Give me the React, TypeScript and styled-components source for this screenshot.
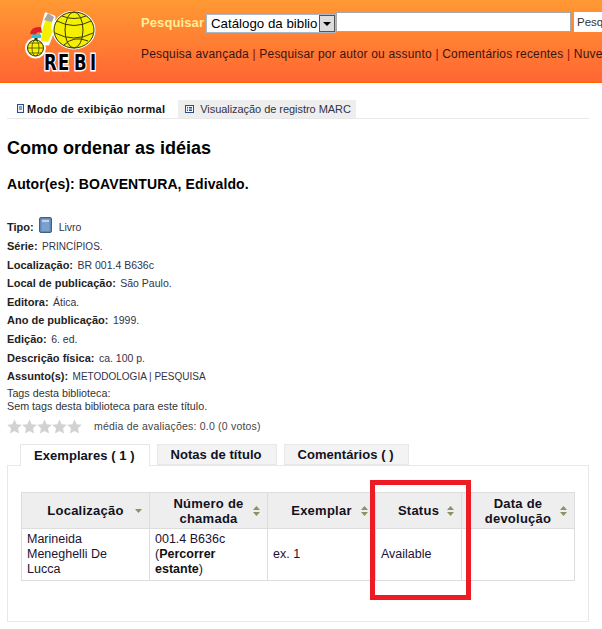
import React from "react";
import styled, { createGlobalStyle } from "styled-components";

const GlobalStyle = createGlobalStyle`
  html, body {
    margin: 0;
    padding: 0;
    background: #ffffff;
    overflow: hidden;
  }
  body {
    font-family: "Liberation Sans", Arial, sans-serif;
    color: #000000;
  }
`;

const fields = [
  { label: "Série:", value: "PRINCÍPIOS.", caps: true },
  { label: "Localização:", value: "BR 001.4 B636c" },
  { label: "Local de publicação:", value: "São Paulo." },
  { label: "Editora:", value: "Ática." },
  { label: "Ano de publicação:", value: "1999." },
  { label: "Edição:", value: "6. ed." },
  { label: "Descrição física:", value: "ca. 100 p." },
  { label: "Assunto(s):", value: "METODOLOGIA | PESQUISA", caps: true },
];

const columns = [
  { title: "Localização", width: 128, sort: "down" },
  { title: "Número de chamada", width: 118, sort: "both" },
  { title: "Exemplar", width: 108, sort: "both" },
  { title: "Status", width: 86, sort: "both" },
  { title: "Data de devolução", width: 113, sort: "both" },
];

const Logo = () => (
  <svg width="76" height="66" viewBox="0 0 76 66">
    <g fill="#ffffff" stroke="#ffffff" strokeWidth="3" strokeLinejoin="round">
      <ellipse cx="50" cy="19" rx="20" ry="18" />
      <circle cx="11.5" cy="37" r="9" />
      <path d="M18 18 L22 3 L30 6 L29 20 L24 33 L17 32 Z" />
    </g>
    <ellipse cx="50" cy="19" rx="20" ry="18" fill="#f5f000" stroke="#333300" strokeWidth="1" />
    <g fill="none" stroke="#3a3a00" strokeWidth="1">
      <ellipse cx="50" cy="19" rx="9" ry="18" />
      <path d="M33 10 Q50 19 67 10" />
      <path d="M31 22 Q50 32 69 22" />
      <path d="M38 5 Q50 10 62 5" />
      <path d="M40 34 Q50 24 64 30" />
    </g>
    <circle cx="11.5" cy="37" r="8" fill="#f5f000" stroke="#333300" strokeWidth="1" />
    <g fill="none" stroke="#3a3a00" strokeWidth="0.7">
      <ellipse cx="11.5" cy="37" rx="3.5" ry="8" />
      <path d="M3.5 37 H19.5 M5 32 H18 M5 42 H18" />
    </g>
    <path d="M19 16 L22 8 L28 10 L27 18 L29 20 L24 31 L17 30 L18 22 Z" fill="#f5f000" />
    <path d="M20 9 L24 2 L30 6 L28 11 Z" fill="#a8a8a0" />
    <path d="M6 23 Q7 15 17 16 L18 22 Q12 20 12 24 Z" fill="#e0202a" />
    <rect x="8" y="23.5" width="9" height="3.5" fill="#20c8d8" />
    <rect x="10.5" y="27" width="3" height="2" fill="#333333" />
    <text
      transform="scale(0.75 1)"
      x="26.7 45.3 66.7 88"
      y="59"
      fill="#000000"
      stroke="#ffffff"
      strokeWidth="3"
      paintOrder="stroke"
      fontFamily='"DejaVu Sans", sans-serif'
      fontSize="22"
      fontWeight="700"
    >
      REBI
    </text>
  </svg>
);

const SortIcon = ({ kind }: { kind: string }) => (
  <svg width="7" height="10" viewBox="0 0 7 10">
    {kind === "both" && <path d="M3.5 0 L7 4 H0 Z" fill="#8b9160" />}
    <path d={kind === "both" ? "M0 6 H7 L3.5 10 Z" : "M0 3 H7 L3.5 7 Z"} fill="#8b9160" />
  </svg>
);

const NormalIcon = () => (
  <svg width="7" height="10" viewBox="0 0 7 10">
    <rect x="0.5" y="0.5" width="6" height="8" fill="#e9eef6" stroke="#2b4f8c" />
    <path d="M2 3 H5 M2 5 H5" stroke="#2b4f8c" />
  </svg>
);

const MarcIcon = () => (
  <svg width="9" height="9" viewBox="0 0 9 9">
    <rect x="0.5" y="0.5" width="8" height="7" fill="#f4f6fa" stroke="#2b4f8c" />
    <path d="M2 2.5 H3 M4 2.5 H7 M2 4 H3 M4 4 H7 M2 5.5 H3 M4 5.5 H7" stroke="#2b4f8c" />
  </svg>
);

const BookIcon = () => (
  <svg width="13" height="16" viewBox="0 0 13 16">
    <rect x="0.5" y="0.5" width="12" height="15" rx="1.5" fill="#5f87b8" stroke="#43607f" />
    <rect x="2.5" y="2" width="8" height="12" fill="#7ba2cf" />
    <path d="M3 4 H10" stroke="#dce8f4" strokeWidth="1.4" />
  </svg>
);

const Star = () => (
  <svg width="15" height="15" viewBox="0 0 15 15">
    <path d="M7.5 0.5 L9.7 5.2 L14.8 5.8 L11 9.3 L12 14.5 L7.5 11.9 L3 14.5 L4 9.3 L0.2 5.8 L5.3 5.2 Z" fill="#d2d2d2" />
  </svg>
);

const App: React.FC = () => {
  return (
    <PageWrapper>
      <GlobalStyle />
      <Header>
        <LogoBox>
          <Logo />
        </LogoBox>
        <HeaderMain>
          <SearchRow>
            <SearchLabel>Pesquisar</SearchLabel>
            <SelectBox>
              <SelectText>Catálogo da biblio</SelectText>
              <SelectArrow>
                <svg width="8" height="4" viewBox="0 0 8 4">
                  <path d="M0 0 H8 L4 4 Z" fill="#000000" />
                </svg>
              </SelectArrow>
            </SelectBox>
            <SearchInput />
            <SearchButton>Pesq</SearchButton>
          </SearchRow>
          <HeaderLinks>
            <span>Pesquisa avançada</span> <Sep>|</Sep> <span>Pesquisar por autor ou assunto</span> <Sep>|</Sep>{" "}
            <span>Comentários recentes</span> <Sep>|</Sep> <span>Nuvem de tags</span>
          </HeaderLinks>
        </HeaderMain>
      </Header>

      <ViewTabs>
        <ViewTab $active>
          <NormalIcon />
          Modo de exibição normal
        </ViewTab>
        <ViewTab>
          <MarcIcon />
          Visualização de registro MARC
        </ViewTab>
      </ViewTabs>

      <Title>Como ordenar as idéias</Title>
      <Author>Autor(es): BOAVENTURA, Edivaldo.</Author>

      <FieldList>
        <TypeRow>
          <FieldLabel>Tipo:</FieldLabel>
          <TypeIcon>
            <BookIcon />
          </TypeIcon>
          <FieldValue>Livro</FieldValue>
        </TypeRow>
        {fields.map((f) => (
          <FieldRow key={f.label}>
            <FieldLabel>{f.label}</FieldLabel> <FieldValue $caps={f.caps}>{f.value}</FieldValue>
          </FieldRow>
        ))}
      </FieldList>

      <TagsBlock>
        Tags desta biblioteca:
        <br />
        Sem tags desta biblioteca para este título.
      </TagsBlock>

      <RatingRow>
        <Stars>
          <Star />
          <Star />
          <Star />
          <Star />
          <Star />
        </Stars>
        <RatingText>média de avaliações: 0.0 (0 votos)</RatingText>
      </RatingRow>

      <DetailTabs>
        <DetailTab $active>Exemplares ( 1 )</DetailTab>
        <DetailTab>Notas de título</DetailTab>
        <DetailTab>Comentários ( )</DetailTab>
      </DetailTabs>

      <Panel>
        <HoldingsTable>
          <colgroup>
            {columns.map((c) => (
              <col key={c.title} width={c.width} />
            ))}
          </colgroup>
          <thead>
            <tr>
              {columns.map((c) => (
                <HeadCell key={c.title}>
                  {c.title}
                  <SortSlot>
                    <SortIcon kind={c.sort} />
                  </SortSlot>
                </HeadCell>
              ))}
            </tr>
          </thead>
          <tbody>
            <tr>
              <BodyCell>Marineida Meneghelli De Lucca</BodyCell>
              <BodyCell>
                001.4 B636c (<strong>Percorrer estante</strong>)
              </BodyCell>
              <BodyCell>ex. 1</BodyCell>
              <BodyCell>Available</BodyCell>
              <BodyCell />
            </tr>
          </tbody>
        </HoldingsTable>
      </Panel>
      <Highlight />
    </PageWrapper>
  );
};

export default App;

const PageWrapper = styled.div`
  width: 602px;
  height: 629px;
  overflow: hidden;
  position: relative;
`;

const Header = styled.div`
  height: 82px;
  display: flex;
  background: linear-gradient(#ff9933, #ff6633);
  border-bottom: 1px solid #ff6600;
`;

const LogoBox = styled.div`
  flex: none;
  width: 141px;
  height: 82px;
  padding: 11px 0 0 24px;
  box-sizing: border-box;
`;

const HeaderMain = styled.div`
  flex: 1;
  min-width: 0;
  padding-top: 12px;
`;

const SearchRow = styled.div`
  display: flex;
  align-items: flex-start;
  white-space: nowrap;

  > * {
    flex: none;
  }
`;

const SearchLabel = styled.div`
  width: 65px;
  padding-top: 3px;
  font-size: 13px;
  letter-spacing: 0.1px;
  font-weight: 700;
  color: #ffee99;
`;

const SelectBox = styled.div`
  width: 130px;
  height: 19px;
  margin-top: 2px;
  display: flex;
  box-sizing: border-box;
  background: #ffffff;
  border: 1px solid #a9b8c8;
`;

const SelectText = styled.div`
  flex: 1;
  padding-left: 4px;
  font-size: 13.3px;
  line-height: 17px;
  overflow: hidden;
`;

const SelectArrow = styled.div`
  flex: none;
  width: 16px;
  display: flex;
  align-items: center;
  justify-content: center;
  box-sizing: border-box;
  background: #dcdcdc;
  border: 1px solid #555555;
`;

const SearchInput = styled.div`
  width: 235px;
  height: 20px;
  box-sizing: border-box;
  background: #ffffff;
  border: 1px solid #a8a8a8;
`;

const SearchButton = styled.div`
  margin-left: 3px;
  width: 40px;
  height: 20px;
  padding-left: 3px;
  box-sizing: border-box;
  background: #ffffff;
  font-size: 11.5px;
  line-height: 20px;
  color: #333333;
`;

const HeaderLinks = styled.div`
  margin-top: 14px;
  font-size: 12px;
  line-height: 15px;
  letter-spacing: 0.19px;
  white-space: nowrap;
  color: #3a1510;
`;

const Sep = styled.span`
  color: #8a0f10;
`;

const ViewTabs = styled.div`
  margin: 17px 13px 0 7px;
  height: 18px;
  display: flex;
  border-bottom: 1px solid #e8e8e8;
`;

const ViewTab = styled.div<{ $active?: boolean }>`
  display: flex;
  align-items: center;
  gap: ${(props) => (props.$active ? "3px" : "6px")};
  padding: ${(props) => (props.$active ? "0 13px 0 10px" : "0 5px 0 7px")};
  background: ${(props) => (props.$active ? "#ffffff" : "#eeeeee")};
  font-size: 11px;
  font-weight: ${(props) => (props.$active ? 700 : 400)};
  letter-spacing: ${(props) => (props.$active ? "0.27px" : "-0.05px")};
  color: ${(props) => (props.$active ? "#111111" : "#333344")};
  white-space: nowrap;
`;

const Title = styled.h1`
  margin: 19px 0 0 7px;
  font-size: 18px;
  line-height: 21px;
  font-weight: 700;
`;

const Author = styled.h2`
  margin: 17px 0 0 7px;
  font-size: 14px;
  line-height: 17px;
  letter-spacing: 0.1px;
  font-weight: 700;
`;

const FieldList = styled.div`
  margin: 21px 0 0 7px;
`;

const TypeRow = styled.div`
  height: 22px;
  padding-bottom: 3px;
  box-sizing: border-box;
  display: flex;
  align-items: flex-end;
`;

const TypeIcon = styled.span`
  display: flex;
  margin: 0 7px 0 5px;
`;

const FieldRow = styled.div`
  height: 18.6px;
  line-height: 18.6px;
  white-space: nowrap;
`;

const FieldLabel = styled.span`
  font-size: 11px;
  font-weight: 700;
  color: #222222;
`;

const FieldValue = styled.span<{ $caps?: boolean }>`
  font-size: ${(props) => (props.$caps ? "10px" : "10.5px")};
  color: #333344;
`;

const TagsBlock = styled.div`
  margin: 2px 0 0 7px;
  font-size: 10.75px;
  line-height: 13px;
  color: #333333;
`;

const RatingRow = styled.div`
  margin: 3.5px 0 0 7px;
  height: 20px;
  display: flex;
  align-items: center;
`;

const Stars = styled.div`
  width: 87px;
  display: flex;
`;

const RatingText = styled.div`
  font-size: 10.5px;
  letter-spacing: 0.2px;
  color: #444444;
`;

const DetailTabs = styled.div`
  margin: 8px 0 0 20px;
  height: 21px;
  display: flex;
  gap: 7px;
  position: relative;
  z-index: 1;
`;

const DetailTab = styled.div<{ $active?: boolean }>`
  height: ${(props) => (props.$active ? "22px" : "21px")};
  padding: 0 14px 0 13px;
  display: flex;
  align-items: center;
  box-sizing: border-box;
  background: ${(props) => (props.$active ? "#ffffff" : "#f3f3f3")};
  border: 1px solid #e8e8e8;
  border-bottom: ${(props) => (props.$active ? "none" : "1px solid #e8e8e8")};
  font-size: 13px;
  letter-spacing: 0.05px;
  font-weight: 700;
  color: #111122;
  white-space: nowrap;
`;

const Panel = styled.div`
  margin-left: 7px;
  width: 582px;
  height: 157px;
  box-sizing: border-box;
  border: 1px solid #e8e8e8;
  padding: 26px 0 0 13px;
`;

const HoldingsTable = styled.table`
  width: 553px;
  table-layout: fixed;
  border-collapse: collapse;
`;

const HeadCell = styled.th`
  position: relative;
  height: 35px;
  padding: 0 14px;
  background: #eeeeee;
  border: 1px solid #dddddd;
  font-size: 13px;
  line-height: 15px;
  letter-spacing: 0.25px;
  font-weight: 700;
  color: #111122;
`;

const SortSlot = styled.span`
  position: absolute;
  right: 7px;
  top: 50%;
  margin-top: -5px;
  display: flex;
`;

const BodyCell = styled.td`
  height: 47px;
  padding: 2px 15px 2px 5px;
  border: 1px solid #dddddd;
  font-size: 12.5px;
  line-height: 15px;
  color: #221133;
  vertical-align: middle;

  strong {
    color: #111111;
  }
`;

const Highlight = styled.div`
  position: absolute;
  left: 370px;
  top: 480px;
  width: 101px;
  height: 120px;
  box-sizing: border-box;
  border: 5px solid #ed1c24;
`;
